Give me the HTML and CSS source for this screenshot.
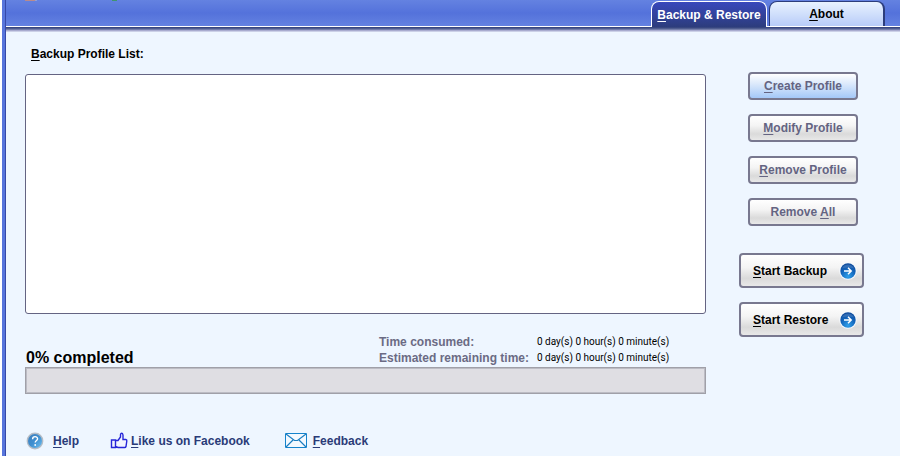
FILE: index.html
```html
<!DOCTYPE html>
<html lang="en">
<head>
  <meta charset="UTF-8">
  <meta name="viewport" content="width=device-width, initial-scale=1.0">
  <title>Backup &amp; Restore</title>
  <link rel="stylesheet" href="styles.css">
</head>
<body>

<div class="window">
  <header class="header">
    <svg class="logo" width="100" height="2" viewBox="0 0 100 2" aria-hidden="true">
      <path d="M0 0h10v1H0z" fill="#b98a8c"/>
      <path d="M10 0h2v1h-2z" fill="#8fa0d8"/>
      <path d="M87 0h5v1h-5z" fill="#3f9470"/>
    </svg>
    <nav class="tabs">
      <button class="tab active" type="button"><span><u>B</u>ackup &amp; Restore</span></button>
      <button class="tab" type="button"><span><u>A</u>bout</span></button>
    </nav>
  </header>

  <div class="shadow"></div>

  <main class="content">
    <section class="profiles">
      <label class="list-label" for="profileList"><u>B</u>ackup Profile List:</label>
      <select class="profile-list" id="profileList" size="10"></select>

      <div class="status">
        <label class="percent" for="progress">0% completed</label>
        <dl class="times">
          <dt>Time consumed:</dt>
          <dd>0 day(s) 0 hour(s) 0 minute(s)</dd>
          <dt>Estimated remaining time:</dt>
          <dd>0 day(s) 0 hour(s) 0 minute(s)</dd>
        </dl>
      </div>
      <progress class="progress" id="progress" value="0" max="100"></progress>
    </section>

    <aside class="actions">
      <div class="manage">
        <button class="btn selected" type="button"><span><u>C</u>reate Profile</span></button>
        <button class="btn" type="button"><span><u>M</u>odify Profile</span></button>
        <button class="btn" type="button"><span><u>R</u>emove Profile</span></button>
        <button class="btn" type="button"><span>Remove <u>A</u>ll</span></button>
      </div>

      <div class="start">
        <button class="btn btn-start" type="button">
          <span><u>S</u>tart Backup</span>
          <svg width="18" height="18" viewBox="0 0 18 18" aria-hidden="true">
            <defs>
              <radialGradient id="ball" cx="50%" cy="85%" r="80%">
                <stop offset="0" stop-color="#2fa0ea"/>
                <stop offset="0.6" stop-color="#1264bb"/>
                <stop offset="1" stop-color="#0c4a9c"/>
              </radialGradient>
            </defs>
            <circle cx="9" cy="9" r="8.8" fill="#f4f8fc"/>
            <circle cx="9" cy="9" r="7.7" fill="url(#ball)"/>
            <path d="M3 6.5a6.5 6.5 0 0 1 12 0Q9 4.500 3 6.500z" fill="#fff" opacity="0.15"/>
            <path d="M5 9h7M9 5.800 12.200 9 9 12.200" fill="none" stroke="#fff" stroke-width="1.500"/>
          </svg>
        </button>
        <button class="btn btn-start" type="button">
          <span><u>S</u>tart Restore</span>
          <svg width="18" height="18" viewBox="0 0 18 18" aria-hidden="true">
            <circle cx="9" cy="9" r="8.8" fill="#f4f8fc"/>
            <circle cx="9" cy="9" r="7.7" fill="url(#ball)"/>
            <path d="M3 6.5a6.5 6.5 0 0 1 12 0Q9 4.500 3 6.500z" fill="#fff" opacity="0.15"/>
            <path d="M5 9h7M9 5.800 12.200 9 9 12.200" fill="none" stroke="#fff" stroke-width="1.500"/>
          </svg>
        </button>
      </div>
    </aside>
  </main>

  <footer class="footer">
    <a class="link link-help" href="#help">
      <svg width="18" height="18" viewBox="0 0 18 18" aria-hidden="true">
        <defs>
          <linearGradient id="help" x1="0" y1="0" x2="1" y2="1">
            <stop offset="0" stop-color="#3e7fbd"/>
            <stop offset="0.5" stop-color="#3f8fd0"/>
            <stop offset="1" stop-color="#6fc0f0"/>
          </linearGradient>
        </defs>
        <circle cx="9" cy="9" r="8.400" fill="#b4bcc6"/>
        <circle cx="9" cy="9" r="7" fill="url(#help)"/>
        <path d="M6.600 7.200c0-3.400 5-3.200 5-.4 0 1.700-2.300 1.700-2.400 3.700" fill="none" stroke="#fff" stroke-width="1.400"/>
        <circle cx="9.200" cy="13" r="0.900" fill="#fff"/>
      </svg>
      <span><u>H</u>elp</span>
    </a>
    <a class="link link-like" href="#facebook">
      <svg width="18" height="18" viewBox="0 0 18 18" aria-hidden="true">
        <path d="M1.500 8h4v7.500h-4zM5.500 8.500H8L10.500 5V2.500q.2-1.200 1.200-1.200t1.300 1.700V7.500h2.800q1.200.2 1 1.500l-.8 5.500q-.3 1-1.300 1H8l-2.500-1" fill="#f2f4ff" stroke="#2626d8" stroke-width="1.400"/>
      </svg>
      <span><u>L</u>ike us on Facebook</span>
    </a>
    <a class="link link-feedback" href="#feedback">
      <svg width="22" height="16" viewBox="0 0 22 16" aria-hidden="true">
        <path d="M.5.500h21v14H.5z" fill="#f3f9ff" stroke="#1583cc"/>
        <path d="M1 1l8.500 6.500h3L21 1M1 14l7-7M21 14l-7-7" fill="none" stroke="#1b7dc0" stroke-width="1.200"/>
      </svg>
      <span><u>F</u>eedback</span>
    </a>
  </footer>
</div>

</body>
</html>
```
FILE: styles.css
```css
* {
  box-sizing: border-box;
}
body {
  margin: 0;
  background: #fff;
  font-family: "Liberation Sans", Arial, sans-serif;
  font-size: 12px;
  line-height: 16px;
}
button {
  font-family: inherit;
  font-size: 12px;
  font-weight: bold;
  line-height: 16px;
  cursor: pointer;
}
u {
  text-underline-offset: 2px;
}
.window {
  min-height: 100vh;
  margin: 0 5px 0 2px;
  padding-left: 1px;
  border-left: 3px solid #5775dc;
  box-shadow: inset 1px 0 #3649a8;
  background: #eef6ff;
}

/* title bar */
.header {
  display: flex;
  justify-content: space-between;
  align-items: flex-start;
  height: 27px;
  padding: 0 15px 0 19px;
  border-bottom: 1px solid #fff;
  background: linear-gradient(#6482e1, #5472db 50%, #6482e1);
}
.tabs {
  display: flex;
  gap: 2px;
  padding-top: 1px;
}
.tab {
  width: 116px;
  height: 25px;
  padding: 0;
  border: 1px solid #2c3d7c;
  border-right-width: 2px;
  border-bottom: none;
  border-radius: 8px 8px 0 0;
  background: linear-gradient(#e8f2ff, #b8ccf8);
  color: #000;
}
.tab.active {
  height: 26px;
  border: 1px solid #fff;
  border-bottom: none;
  background: linear-gradient(#3848bc, #2c3c7c);
  color: #fff;
}
.shadow {
  height: 5px;
  background: linear-gradient(#2b3b78, #5a6797 40%, #a8abcf 70%, #dce3f3);
}

/* main area */
.content {
  display: grid;
  grid-template-columns: 1fr 125px;
  gap: 33px;
  padding: 14px 36px 0 19px;
}
.profiles {
  display: flex;
  flex-direction: column;
}
.list-label {
  margin-bottom: 12px;
  padding-left: 6px;
  font-weight: bold;
}
.profile-list {
  width: 100%;
  height: 240px;
  border: 1px solid #646482;
  border-radius: 3px;
  background: #fff;
}
.status {
  display: flex;
  justify-content: space-between;
  align-items: flex-end;
  padding: 20px 33px 1px 1px;
}
.percent {
  font-size: 16px;
  font-weight: bold;
  line-height: 16px;
}
.times {
  display: grid;
  grid-template-columns: 158px 136px;
  margin: 0;
}
.times dt {
  color: #6b6b84;
  font-weight: bold;
}
.times dd {
  margin: 0;
  font-family: Roboto, sans-serif;
  font-size: 10px;
  white-space: nowrap;
}
.progress {
  appearance: none;
  width: 100%;
  height: 27px;
  border: 1px solid #a0a0a8;
  box-shadow: inset 0 0 0 1px #bcbcc4;
  background: #dfdee3;
}
.progress::-webkit-progress-bar {
  background: transparent;
}
.progress::-webkit-progress-value {
  background: #5472db;
}

/* buttons */
.actions {
  display: flex;
  flex-direction: column;
  gap: 27px;
  padding-top: 26px;
}
.manage,
.start {
  display: flex;
  flex-direction: column;
  gap: 14px;
}
.manage {
  padding: 0 6px 0 9px;
}
.btn {
  height: 28px;
  padding: 0;
  border: 2px solid #78788f;
  border-radius: 4px;
  background: linear-gradient(#fff, #f4f4f4 40%, #dadada 75%, #e8e8e8);
  color: #646482;
}
.btn.selected {
  background: linear-gradient(#fff, #d8e7fb 45%, #a4c8f8);
}
.btn-start {
  display: flex;
  justify-content: space-between;
  align-items: center;
  height: 35px;
  padding: 0 5px 0 12px;
  color: #000;
}

/* bottom links */
.footer {
  display: flex;
  align-items: center;
  padding: 38px 20px 0;
}
.link {
  display: flex;
  align-items: center;
  color: #2a3b78;
  font-weight: bold;
  text-decoration: none;
}
.link-help {
  gap: 9px;
}
.link-like {
  gap: 3px;
  margin-left: 31px;
}
.link-feedback {
  gap: 6px;
  margin-left: 35px;
}
```
